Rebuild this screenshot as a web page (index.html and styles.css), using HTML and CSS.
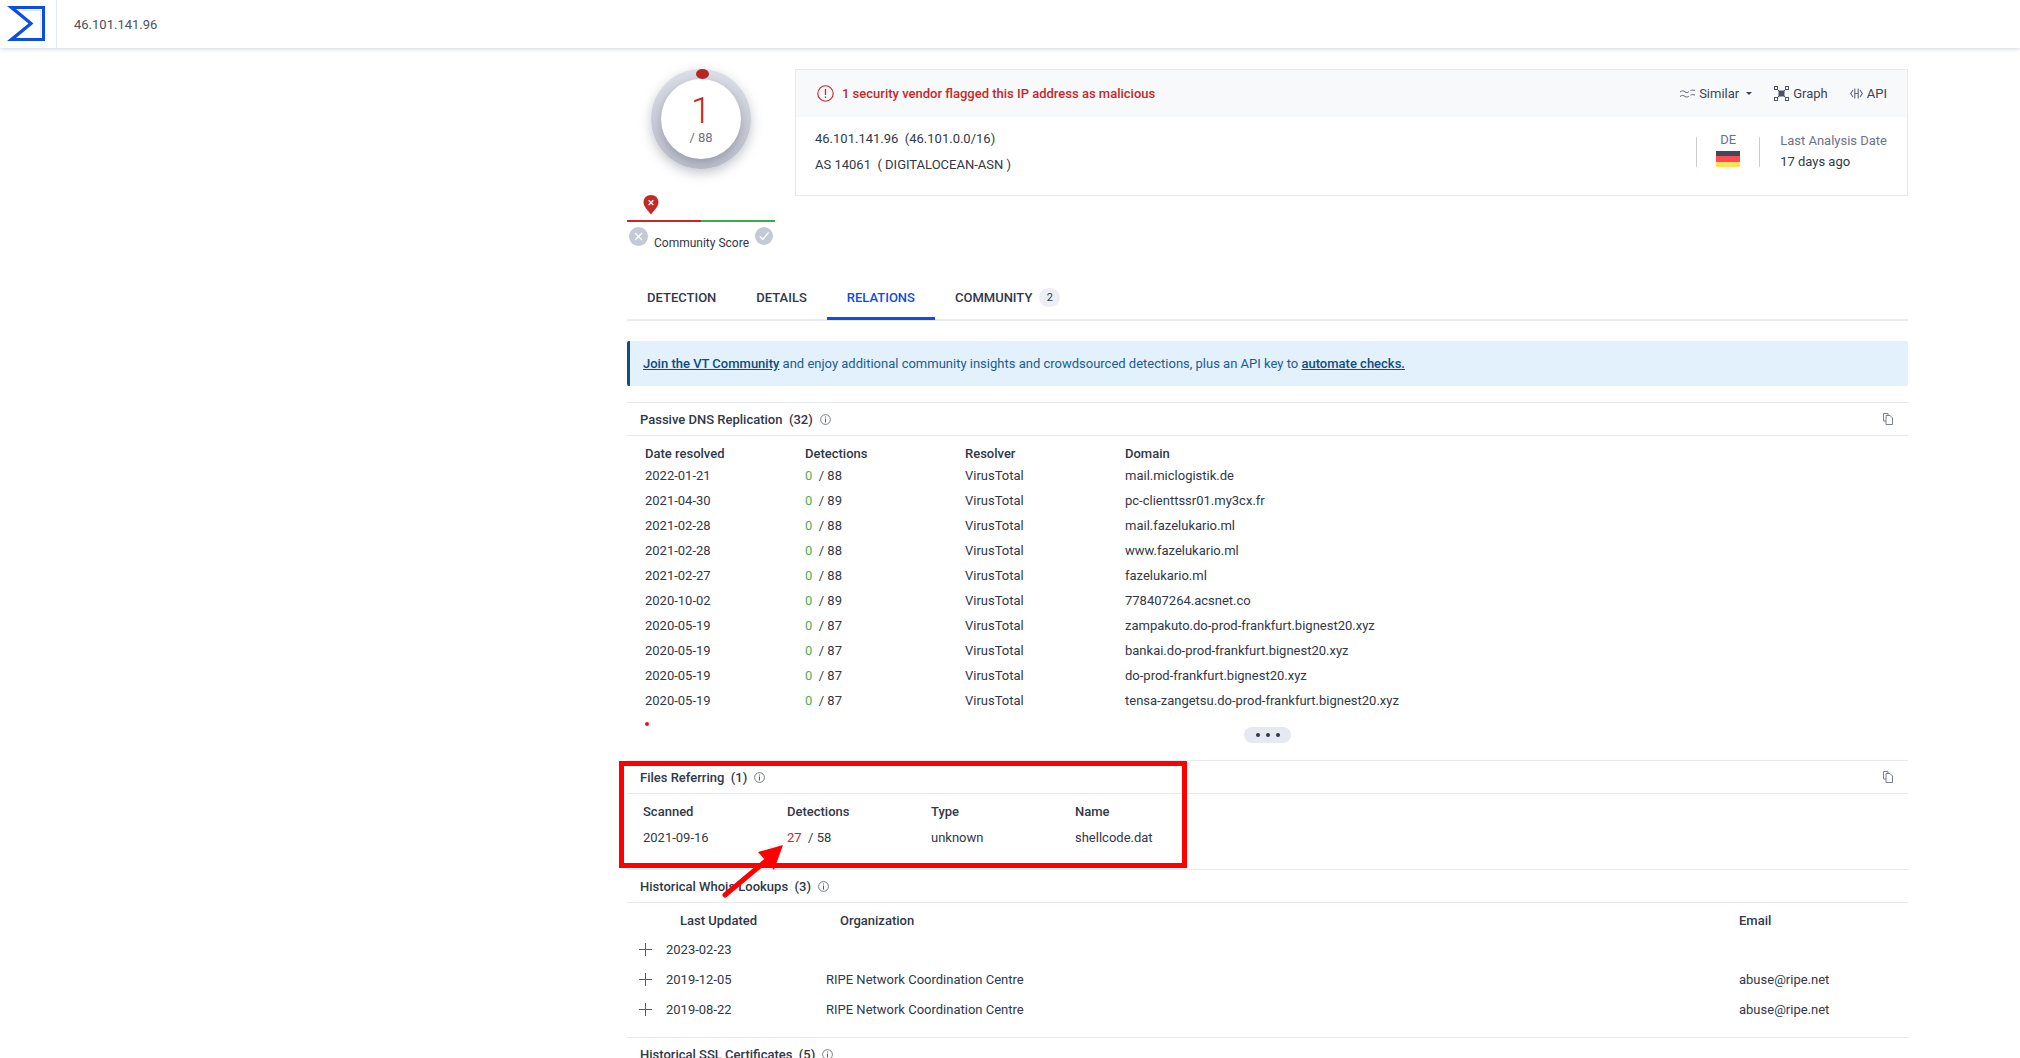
FILE: index.html
```html
<!DOCTYPE html>
<html lang="en">
<head>
	<meta charset="UTF-8">
	<title>46.101.141.96 - VirusTotal</title>
	<link rel="stylesheet" href="styles.css">
</head>
<body>
	<!-- top bar -->
	<header class="topbar">
		<div class="logo-box">
			<svg class="logo" width="38" height="36" viewBox="0 0 38 36">
				<path fill="#0b4ee0" fill-rule="evenodd" d="M0 0H38V35H0L21.500 17.500ZM9 3 26.500 17.500 9 32H35V3Z"/>
				<path fill="#dfe7fb" d="M11 3.800H34.200V5H12.500ZM33.300 5H34.200V31H33.300Z"/>
			</svg>
		</div>
		<div class="search-text">46.101.141.96</div>
	</header>

	<main class="main">
		<div class="summary">
			<!-- score -->
			<div class="score">
				<div class="ring">
					<span class="ring-dot"></span>
					<div class="ring-inner">
						<span class="ring-num">1</span>
						<span class="ring-total">/ 88</span>
					</div>
				</div>
				<div class="pin-row">
					<svg class="pin" width="16" height="20" viewBox="0 0 16 20">
						<path fill="#c62828" d="M8 0C3.600 0 .5 3.200 .5 7.300.5 12 5 15.500 8 19.500 11 15.500 15.500 12 15.500 7.300 15.500 3.200 12.400 0 8 0Z"/>
						<path stroke="#fff" stroke-width="1.400" d="M5.700 5.300 10.300 9.900M10.300 5.300 5.700 9.900"/>
					</svg>
				</div>
				<div class="score-line"></div>
				<div class="vote-row">
					<svg width="19" height="19" viewBox="0 0 19 19">
						<circle cx="9.500" cy="9.500" r="9.500" fill="#c5c9d6"/>
						<path stroke="#fff" stroke-width="1.200" d="M6 6 13 13M13 6 6 13"/>
					</svg>
					<span class="vote-label">Community Score</span>
					<svg width="18" height="18" viewBox="0 0 18 18">
						<circle cx="9" cy="9" r="9" fill="#c5c9d6"/>
						<path stroke="#fff" stroke-width="1.200" fill="none" d="M4.800 9.300 7.800 12.500 13.500 5.500"/>
					</svg>
				</div>
			</div>

			<!-- card -->
			<section class="card">
				<div class="card-head">
					<svg class="alert-icon" width="17" height="17" viewBox="0 0 17 17">
						<circle cx="8.500" cy="8.500" r="7.700" fill="none" stroke="#c62828" stroke-width="1.100"/>
						<path stroke="#c62828" stroke-width="1.300" d="M8.500 4V10M8.500 11.500V13"/>
					</svg>
					<span class="alert-text">1 security vendor flagged this IP address as malicious</span>
					<div class="actions">
						<a class="action action-similar">
							<svg width="15" height="9" viewBox="0 0 15 9" fill="none" stroke="#5f6675">
								<path d="M0 3C2 1.500 3.500 1.500 5 3 6.500 4 8 3.500 9 2.500M10.500 1.500C12 1 13.500 1 15 1.500M0 7.500C2 6 3.500 6 5 7.500 6.500 8.500 8 8 9 7M10.500 6C12 5.500 13.500 5.500 15 6"/>
							</svg>
							Similar <span class="caret"></span>
						</a>
						<a class="action action-graph">
							<svg width="15" height="15" viewBox="0 0 15 15" fill="none" stroke="#4b5263">
								<rect x="5" y="5" width="5" height="5" fill="#4b5263"/>
								<rect x=".5" y=".5" width="3" height="3"/><rect x="11.500" y=".5" width="3" height="3"/>
								<rect x=".5" y="11.500" width="3" height="3"/><rect x="11.500" y="11.500" width="3" height="3"/>
								<path d="M3.500 3.500 5 5M11.500 3.500 10 5M3.500 11.500 5 10M11.500 11.500 10 10"/>
							</svg>
							Graph
						</a>
						<a class="action">
							<svg width="13" height="11" viewBox="0 0 13 11" fill="none" stroke="#5f6675" stroke-width="1.100">
								<path d="M3 2 .7 5.500 3 9M10 2 12.300 5.500 10 9M4.800 .5V10.500M8.200 .5V10.500M4.800 5.500H8.200"/>
							</svg>
							API
						</a>
					</div>
				</div>
				<div class="card-body">
					<div class="card-ident">
						<div>46.101.141.96&nbsp; (46.101.0.0/16)</div>
						<div>AS 14061 &nbsp;( DIGITALOCEAN-ASN )</div>
					</div>
					<div class="card-meta">
						<div class="meta-country">
							<span class="meta-label">DE</span>
							<span class="flag"><i class="flag-a"></i><i class="flag-b"></i><i class="flag-c"></i></span>
						</div>
						<div class="meta-date">
							<span class="meta-label">Last Analysis Date</span>
							<span>17 days ago</span>
						</div>
					</div>
				</div>
			</section>
		</div>

		<!-- tabs -->
		<nav class="tabs">
			<a class="tab">DETECTION</a>
			<a class="tab">DETAILS</a>
			<a class="tab current">RELATIONS</a>
			<a class="tab">COMMUNITY <span class="badge">2</span></a>
		</nav>

		<div class="banner">
			<span><a class="banner-link">Join the VT Community</a> and enjoy additional community insights and crowdsourced detections, plus an API key to <a class="banner-link">automate checks.</a></span>
		</div>

		<!-- passive dns -->
		<section class="sec">
			<div class="sec-head">
				<span class="sec-title">Passive DNS Replication&nbsp; (32)</span>
				<svg class="info" width="11" height="11" viewBox="0 0 11 11"><circle cx="5.500" cy="5.500" r="4.900" fill="none" stroke="#555c6b" stroke-width=".8"/><path stroke="#555c6b" d="M5.500 4.500V8.500M5.500 2.500V3.500"/></svg>
				<svg class="copy" width="10" height="12" viewBox="0 0 10 12" fill="#fff" stroke="#6b7280" stroke-width=".9"><path d="M.5 .5H5V8H.5Z"/><path d="M3 2.500H7L9.500 5V11.500H3Z"/></svg>
			</div>
			<div class="dns-table">
				<div class="dns-row dns-top"><span>Date resolved</span><span>Detections</span><span>Resolver</span><span>Domain</span></div>
				<div class="dns-row"><span>2022-01-21</span><span><b class="zero">0</b>&nbsp; / 88</span><span>VirusTotal</span><span>mail.miclogistik.de</span></div>
				<div class="dns-row"><span>2021-04-30</span><span><b class="zero">0</b>&nbsp; / 89</span><span>VirusTotal</span><span>pc-clienttssr01.my3cx.fr</span></div>
				<div class="dns-row"><span>2021-02-28</span><span><b class="zero">0</b>&nbsp; / 88</span><span>VirusTotal</span><span>mail.fazelukario.ml</span></div>
				<div class="dns-row"><span>2021-02-28</span><span><b class="zero">0</b>&nbsp; / 88</span><span>VirusTotal</span><span>www.fazelukario.ml</span></div>
				<div class="dns-row"><span>2021-02-27</span><span><b class="zero">0</b>&nbsp; / 88</span><span>VirusTotal</span><span>fazelukario.ml</span></div>
				<div class="dns-row"><span>2020-10-02</span><span><b class="zero">0</b>&nbsp; / 89</span><span>VirusTotal</span><span>778407264.acsnet.co</span></div>
				<div class="dns-row"><span>2020-05-19</span><span><b class="zero">0</b>&nbsp; / 87</span><span>VirusTotal</span><span>zampakuto.do-prod-frankfurt.bignest20.xyz</span></div>
				<div class="dns-row"><span>2020-05-19</span><span><b class="zero">0</b>&nbsp; / 87</span><span>VirusTotal</span><span>bankai.do-prod-frankfurt.bignest20.xyz</span></div>
				<div class="dns-row"><span>2020-05-19</span><span><b class="zero">0</b>&nbsp; / 87</span><span>VirusTotal</span><span>do-prod-frankfurt.bignest20.xyz</span></div>
				<div class="dns-row"><span>2020-05-19</span><span><b class="zero">0</b>&nbsp; / 87</span><span>VirusTotal</span><span>tensa-zangetsu.do-prod-frankfurt.bignest20.xyz</span></div>
			</div>
			<div class="more-row">
				<span class="red-dot"></span>
				<span class="more"><i></i><i></i><i></i></span>
			</div>
		</section>

		<!-- files referring -->
		<section class="sec">
			<div class="sec-head">
				<span class="sec-title">Files Referring&nbsp; (1)</span>
				<svg class="info" width="11" height="11" viewBox="0 0 11 11"><circle cx="5.500" cy="5.500" r="4.900" fill="none" stroke="#555c6b" stroke-width=".8"/><path stroke="#555c6b" d="M5.500 4.500V8.500M5.500 2.500V3.500"/></svg>
				<svg class="copy" width="10" height="12" viewBox="0 0 10 12" fill="#fff" stroke="#6b7280" stroke-width=".9"><path d="M.5 .5H5V8H.5Z"/><path d="M3 2.500H7L9.500 5V11.500H3Z"/></svg>
			</div>
			<div class="files-table">
				<div class="files-row dns-top"><span>Scanned</span><span>Detections</span><span>Type</span><span>Name</span></div>
				<div class="files-row"><span>2021-09-16</span><span><b class="hit">27</b>&nbsp; / 58</span><span>unknown</span><span>shellcode.dat</span></div>
			</div>
		</section>

		<!-- whois -->
		<section class="sec">
			<div class="sec-head">
				<span class="sec-title">Historical Whois Lookups&nbsp; (3)</span>
				<svg class="info" width="11" height="11" viewBox="0 0 11 11"><circle cx="5.500" cy="5.500" r="4.900" fill="none" stroke="#555c6b" stroke-width=".8"/><path stroke="#555c6b" d="M5.500 4.500V8.500M5.500 2.500V3.500"/></svg>
			</div>
			<div class="whois-table">
				<div class="whois-top dns-top"><span class="whois-updated">Last Updated</span><span class="whois-org">Organization</span><span class="whois-email">Email</span></div>
				<div class="whois-row"><i class="plus"></i><span class="whois-date">2023-02-23</span><span class="whois-name"></span><span></span></div>
				<div class="whois-row"><i class="plus"></i><span class="whois-date">2019-12-05</span><span class="whois-name">RIPE Network Coordination Centre</span><span>abuse@ripe.net</span></div>
				<div class="whois-row"><i class="plus"></i><span class="whois-date">2019-08-22</span><span class="whois-name">RIPE Network Coordination Centre</span><span>abuse@ripe.net</span></div>
			</div>
		</section>

		<!-- ssl -->
		<section class="sec">
			<div class="sec-head no-line">
				<span class="sec-title">Historical SSL Certificates&nbsp; (5)</span>
				<svg class="info" width="11" height="11" viewBox="0 0 11 11"><circle cx="5.500" cy="5.500" r="4.900" fill="none" stroke="#555c6b" stroke-width=".8"/><path stroke="#555c6b" d="M5.500 4.500V8.500M5.500 2.500V3.500"/></svg>
			</div>
		</section>
	</main>

	<!-- red markup drawn over the screenshot -->
	<div class="mark-box"></div>
	<svg class="mark-arrow" width="70" height="60" viewBox="0 0 70 60">
		<path d="M5 55 53 15" stroke="#f00" stroke-width="5" stroke-linecap="round"/>
		<path d="M63 5 38 12 54 30Z" fill="#f00"/>
	</svg>
</body>
</html>
```

FILE: styles.css
```css
* {
    padding: 0;
    margin: 0;
    box-sizing: border-box;
}

html, body {
    height: 1058px;
    overflow: hidden;
}

body {
    position: relative;
    background: #fff;
    font-family: Roboto, "Liberation Sans", sans-serif;
    font-size: 13px;
    color: #313848;
}

/* top bar */
.topbar {
    display: flex;
    align-items: center;
    height: 48px;
    background: #fff;
    box-shadow: 0 1px 4px rgba(120, 135, 170, .35);
}

.logo-box {
    display: flex;
    align-items: center;
    width: 57px;
    height: 48px;
    padding-left: 7px;
    border-right: 1px solid #e3e8f2;
}

.search-text {
    margin-left: 17px;
    color: #4a4f5c;
}

/* main column */
.main {
    width: 1281px;
    margin-left: 627px;
    padding-top: 21px;
}

.summary {
    display: flex;
    gap: 20px;
    height: 209px;
}

/* score */
.score {
    width: 148px;
}

.ring {
    position: relative;
    display: flex;
    align-items: center;
    justify-content: center;
    width: 100px;
    height: 100px;
    margin: 0 auto;
    border-radius: 50%;
    background: linear-gradient(#dcdee6, #b9bcc8);
    box-shadow: 0 4px 12px rgba(90, 95, 115, .35);
}

.ring-dot {
    position: absolute;
    top: 0;
    left: 45px;
    width: 13px;
    height: 10px;
    border-radius: 50%;
    background: #b92525;
}

.ring-inner {
    display: flex;
    flex-direction: column;
    align-items: center;
    width: 80px;
    height: 80px;
    padding-top: 14px;
    border-radius: 50%;
    background: #fff;
    box-shadow: 0 3px 8px rgba(60, 65, 85, .3);
}

.ring-num {
    font-size: 36px;
    font-weight: 300;
    line-height: 36px;
    color: #c62828;
}

.ring-total {
    margin-top: 2px;
    line-height: 14px;
    color: #6b7280;
}

.pin-row {
    height: 20px;
    margin-top: 26px;
    padding-left: 16px;
}

.score-line {
    height: 2px;
    margin-top: 5px;
    background: linear-gradient(90deg, #c62828 50%, #3bab4e 50%);
}

.vote-row {
    display: flex;
    align-items: flex-start;
    justify-content: space-between;
    margin-top: 5px;
    padding: 0 2px;
}

.vote-label {
    margin-top: 9px;
    font-size: 12px;
    line-height: 14px;
}

/* card */
.card {
    flex: 1;
    height: 127px;
    border: 1px solid #e6e9f0;
}

.card-head {
    display: flex;
    align-items: center;
    height: 47px;
    padding: 0 20px 0 21px;
    background: #f8f9fb;
}

.alert-text {
    margin-left: 8px;
    font-weight: 500;
    color: #c62828;
}

.actions {
    display: flex;
    align-items: center;
    gap: 22px;
    margin-left: auto;
}

.action {
    display: flex;
    align-items: center;
    gap: 4px;
    color: #3c4353;
}

.caret {
    width: 0;
    height: 0;
    margin-left: 3px;
    border: 3px solid transparent;
    border-top-color: #3c4353;
    border-bottom: 0;
}

.card-body {
    display: flex;
    justify-content: space-between;
    padding: 13px 20px 0 19px;
}

.card-ident div {
    height: 26px;
    line-height: 18px;
}

.card-meta {
    display: flex;
    align-items: flex-start;
    padding-top: 3px;
}

.meta-country {
    display: flex;
    flex-direction: column;
    align-items: center;
    width: 64px;
    height: 30px;
    margin-top: 4px;
    border-left: 1px solid #c9ccd4;
    border-right: 1px solid #c9ccd4;
}

.meta-label {
    display: block;
    line-height: 16px;
    color: #6b7287;
}

.meta-country .meta-label {
    margin-top: -5px;
}

.flag {
    display: block;
    width: 24px;
    margin-top: 3px;
}

.flag i {
    display: block;
    height: 5.330px;
}

.flag-a { background: #464655; }
.flag-b { background: #ff4b55; }
.flag-c { background: #ffe15a; }

.meta-date {
    display: flex;
    flex-direction: column;
    gap: 5px;
    margin-left: 20px;
}

/* tabs */
.tabs {
    display: flex;
    height: 43px;
    border-bottom: 2px solid #e8ebf2;
}

.tab {
    display: flex;
    align-items: center;
    height: 42px;
    padding: 0 20px 4px;
    font-weight: 500;
    color: #313848;
}

.tab.current {
    color: #0b4ee0;
    border-bottom: 3px solid #0b4ee0;
    padding-bottom: 1px;
}

.badge {
    display: flex;
    align-items: center;
    justify-content: center;
    width: 21px;
    height: 19px;
    margin-left: 7px;
    border-radius: 10px;
    background: #eceef4;
    font-size: 11px;
    font-weight: 400;
}

/* banner */
.banner {
    display: flex;
    align-items: center;
    height: 45px;
    margin-top: 20px;
    margin-bottom: 16px;
    padding-left: 13px;
    border-left: 3px solid #0f4c81;
    border-radius: 2px;
    background: #e3f1fc;
    color: #1a5c92;
}

.banner-link {
    font-weight: 500;
    color: #0f4c81;
    text-decoration: underline;
}

/* sections */
.sec-head {
    display: flex;
    align-items: center;
    height: 34px;
    padding: 0 15px 0 13px;
    border-top: 1px solid #e6e9f0;
    border-bottom: 1px solid #e6e9f0;
}

.sec-head.no-line {
    border-bottom: 0;
}

.sec-title {
    font-weight: 500;
}

.info {
    margin-left: 7px;
}

.copy {
    margin-left: auto;
}

.dns-table {
    padding: 9px 0 0 18px;
}

.dns-row {
    display: grid;
    grid-template-columns: 160px 160px 160px 1fr;
    align-items: center;
    height: 25px;
}

.dns-top {
    height: 18px;
    font-weight: 500;
    line-height: 18px;
}

.zero {
    font-weight: 400;
    color: #4caf50;
}

.hit {
    font-weight: 400;
    color: #c62828;
}

.more-row {
    position: relative;
    display: flex;
    justify-content: center;
    height: 47px;
    padding-top: 14px;
}

.red-dot {
    position: absolute;
    top: 9px;
    left: 18px;
    width: 4px;
    height: 4px;
    border-radius: 50%;
    background: #e8141c;
}

.more {
    display: flex;
    align-items: center;
    justify-content: center;
    gap: 6px;
    width: 47px;
    height: 16px;
    border-radius: 8px;
    background: #e6e9f1;
}

.more i {
    width: 4px;
    height: 4px;
    border-radius: 50%;
    background: #313848;
}

.files-table {
    height: 75px;
    padding: 9px 0 0 16px;
}

.files-row {
    display: grid;
    grid-template-columns: 144px 144px 144px 1fr;
    align-items: center;
    height: 25px;
}

.files-row.dns-top {
    height: 18px;
    margin-bottom: 4px;
}

.whois-table {
    height: 134px;
    padding-top: 9px;
}

.whois-top {
    display: flex;
    margin-bottom: 4px;
}

.whois-updated {
    width: 160px;
    margin-left: 53px;
}

.whois-org {
    width: 899px;
}

.whois-row {
    display: grid;
    grid-template-columns: 39px 160px 913px 1fr;
    align-items: center;
    height: 30px;
}

.whois-date {
    grid-column: 2;
}

.plus {
    position: relative;
    display: block;
    width: 13px;
    height: 13px;
    margin-left: 12px;
    background: linear-gradient(#555c6b, #555c6b) center / 13px 1px no-repeat,
                linear-gradient(#555c6b, #555c6b) center / 1px 13px no-repeat;
}

/* red markup */
.mark-box {
    position: absolute;
    top: 761px;
    left: 619px;
    width: 568px;
    height: 107px;
    border: 5px solid #f00;
}

.mark-arrow {
    position: absolute;
    top: 840px;
    left: 720px;
}
```
